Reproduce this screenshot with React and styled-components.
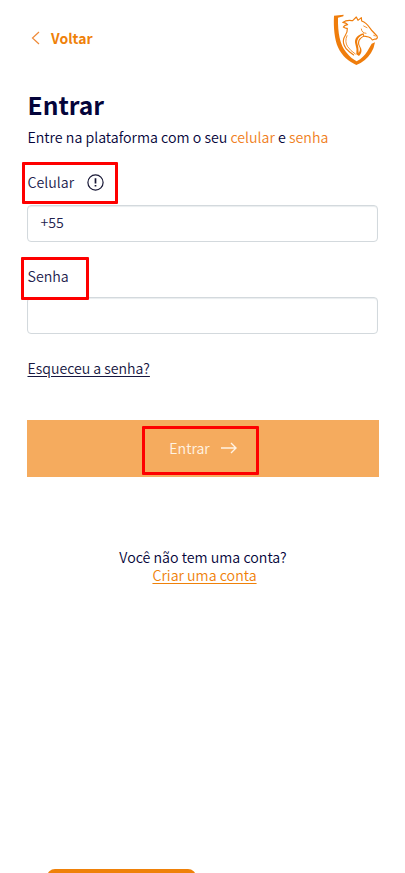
import React from "react";
import styled, { createGlobalStyle } from "styled-components";

const Global = createGlobalStyle`
  * { box-sizing: border-box; }
  body { margin: 0; background: #fff; }
`;

const Screen = styled.main`
  position: relative;
  width: 405px;
  height: 873px;
  overflow: hidden;
  display: flex;
  flex-direction: column;
  padding: 14px 27px 0;
  background: #fff;
  color: #04043a;
  font-family: "Noto Sans CJK JP", "Noto Sans CJK SC", sans-serif;
  font-size: 14.2px;
  font-weight: 350;
  line-height: 18px;
`;

const Header = styled.header`
  display: flex;
  justify-content: space-between;
  height: 52px;
`;

const Back = styled.a`
  display: flex;
  align-items: center;
  gap: 10px;
  height: 48px;
  padding-left: 4px;
  color: #ef8109;
  font-weight: 700;
  font-size: 14px;
`;

const Logo = styled.svg`
  width: 60px;
  height: 62px;
  margin: -6px -7px 0 0;
`;

const Title = styled.h1`
  margin: 20px 0 0 0.5px;
  height: 38px;
  font-size: 24.6px;
  line-height: 36px;
  font-weight: 700;
  white-space: nowrap;
`;

const Intro = styled.p`
  margin: 4px 0 0 0.5px;
  white-space: nowrap;
`;

const Accent = styled.span`
  color: #f07f22;
`;

const Field = styled.div`
  display: flex;
  flex-direction: column;
  gap: ${(p) => p.$gap};
  margin-top: ${(p) => p.$top};
`;

const Label = styled.label`
  display: flex;
  align-items: center;
  gap: 13px;
  height: 18px;
  padding-left: 0.5px;
  color: #22224d;
`;

const Input = styled.div`
  height: 37px;
  padding: 0 12.5px;
  border: 1px solid #d3d9dd;
  border-radius: 4px;
  box-shadow: inset 0 1px 1px #e9edef;
  line-height: 33px;
  color: #22224d;
`;

const Link = styled.a`
  align-self: ${(p) => (p.$center ? "center" : "flex-start")};
  margin: ${(p) => (p.$center ? "0 0 0 3px" : "25px 0 0 0.5px")};
  font-size: ${(p) => (p.$center ? "14.2px" : "14.1px")};
  color: ${(p) => (p.$center ? "#ef8109" : "#16163f")};
  text-decoration: underline;
  text-decoration-thickness: 1px;
  text-underline-offset: 2px;
`;

const Submit = styled.button`
  display: flex;
  flex: none;
  align-items: center;
  justify-content: center;
  gap: 11px;
  height: 57px;
  margin: 43px -1px 0 0;
  padding: 0 0 1px;
  border: 0;
  background: #f5ab5e;
  color: #fff3e4;
  font: inherit;
`;

const Signup = styled.section`
  display: flex;
  flex-direction: column;
  align-items: center;
  margin: 71px -1px 0 0;
`;

const BottomTab = styled.div`
  width: 149px;
  height: 20px;
  margin: auto 0 -16px 20px;
  flex: none;
  border-radius: 8px;
  background: #ef8109;
`;

const Highlight = styled.div`
  position: absolute;
  left: ${(p) => p.$x}px;
  top: ${(p) => p.$y}px;
  width: ${(p) => p.$w}px;
  height: ${(p) => p.$h}px;
  border: 3px solid #fe0000;
  border-radius: 1px;
  pointer-events: none;
`;

const HorseShield = () => (
  <Logo viewBox="0 0 180 186" fill="#ef7d0c">
    <path d="M27 23Q42 22 56 20L55 25Q47 28 39 29C38 73 45 110 63 132C74 147 86 155 95 160C110 152 119 143 127 130L140 107L150 103Q147 122 138 135Q121 161 94 171C72 161 51 145 39 118C29 94 25 58 27 23Z" />
    <g fill="none" stroke="#ef7d0c" strokeLinejoin="round" strokeLinecap="round">
      <path strokeWidth="3.5" d="M54 43C64 35 73 37 83 38L94 27L99 37L109 29L110 39C126 44 132 56 139 66L156 84C159 90 155 94 150 93L142 96L137 90C130 85 122 86 114 84" />
      <path strokeWidth="3.5" d="M54 43Q63 44 68 50Q59 51 55 57Q62 62 67 61Q68 73 60 84C50 99 56 119 73 131L86 141" />
      <path strokeWidth="2.5" d="M66 83Q58 101 68 116Q76 128 91 138M109 63Q110 75 123 76" />
      <path strokeWidth="2.5" d="M116 54L126 59M146 82L151 84" />
    </g>
    <path d="M116 76C99 79 86 93 91 108Q96 121 94 139L102 144C112 134 111 124 105 115C99 103 104 92 118 85Z" />
    <path fill="#fff" d="M115 80C103 84 95 94 97 105Q101 116 101 135C107 127 105 121 102 115C95 101 101 91 114 84Z" />
  </Logo>
);

export default function App() {
  return (
    <>
      <Global />
      <Screen>
        <Header>
          <Back>
            <svg width="10" height="14" viewBox="0 0 10 14" fill="none" stroke="#ef8a38" strokeWidth="1.2">
              <path d="M8 1L1.5 7L8 13" />
            </svg>
            Voltar
          </Back>
          <HorseShield />
        </Header>
        <Title>Entrar</Title>
        <Intro>
          Entre na plataforma com o seu <Accent>celular</Accent> e <Accent>senha</Accent>
        </Intro>
        <Field $top="27px" $gap="14px">
          <Label>
            Celular
            <svg width="17" height="17" viewBox="0 0 17 17" fill="none" stroke="#171735">
              <circle cx="8.5" cy="8.5" r="7.6" strokeWidth="1.2" />
              <path d="M8.5 4.2V9.6M8.5 11V12.6" strokeWidth="1.7" />
            </svg>
          </Label>
          <Input>+55</Input>
        </Field>
        <Field $top="25px" $gap="12px">
          <Label>Senha</Label>
          <Input />
        </Field>
        <Link>Esqueceu a senha?</Link>
        <Submit>
          Entrar
          <svg width="16" height="12" viewBox="0 0 16 12" fill="none" stroke="#fff3e4" strokeWidth="1.4">
            <path d="M0 6H14.5M10 1L15 6L10 11" />
          </svg>
        </Submit>
        <Signup>
          <span>Você não tem uma conta?</span>
          <Link $center>Criar uma conta</Link>
        </Signup>
        <BottomTab />
        <Highlight $x={22} $y={162} $w={96} $h={42} />
        <Highlight $x={21} $y={257} $w={68} $h={43} />
        <Highlight $x={142} $y={426} $w={117} $h={49} />
      </Screen>
    </>
  );
}
